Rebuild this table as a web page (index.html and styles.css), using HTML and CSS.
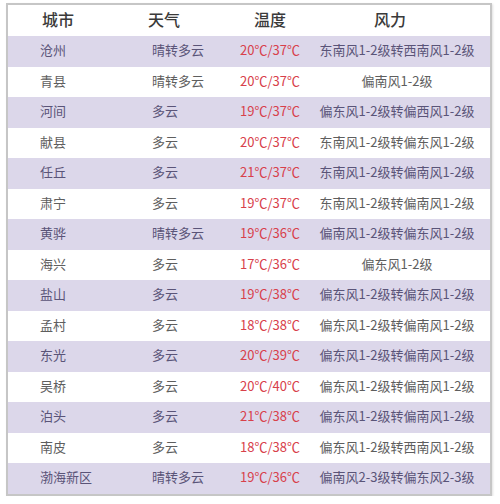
FILE: index.html
```html
<!DOCTYPE html>
<html lang="zh-CN">
<head>
<meta charset="utf-8">
<title>天气</title>
<link rel="stylesheet" href="styles.css">
</head>
<body>
<div class="table">
  <div class="row head">
    <div class="c city">城市</div><div class="c wx">天气</div><div class="c temp">温度</div><div class="c wind">风力</div>
  </div>
  <div class="row alt"><div class="c city">沧州</div><div class="c wx">晴转多云</div><div class="c temp">20℃/37℃</div><div class="c wind">东南风1-2级转西南风1-2级</div></div>
  <div class="row"><div class="c city">青县</div><div class="c wx">晴转多云</div><div class="c temp">20℃/37℃</div><div class="c wind">偏南风1-2级</div></div>
  <div class="row alt"><div class="c city">河间</div><div class="c wx">多云</div><div class="c temp">19℃/37℃</div><div class="c wind">偏东风1-2级转偏西风1-2级</div></div>
  <div class="row"><div class="c city">献县</div><div class="c wx">多云</div><div class="c temp">20℃/37℃</div><div class="c wind">东南风1-2级转偏东风1-2级</div></div>
  <div class="row alt"><div class="c city">任丘</div><div class="c wx">多云</div><div class="c temp">21℃/37℃</div><div class="c wind">东南风1-2级转偏南风1-2级</div></div>
  <div class="row"><div class="c city">肃宁</div><div class="c wx">多云</div><div class="c temp">19℃/37℃</div><div class="c wind">东南风1-2级转偏南风1-2级</div></div>
  <div class="row alt"><div class="c city">黄骅</div><div class="c wx">晴转多云</div><div class="c temp">19℃/36℃</div><div class="c wind">偏南风1-2级转偏东风1-2级</div></div>
  <div class="row"><div class="c city">海兴</div><div class="c wx">多云</div><div class="c temp">17℃/36℃</div><div class="c wind">偏东风1-2级</div></div>
  <div class="row alt"><div class="c city">盐山</div><div class="c wx">多云</div><div class="c temp">19℃/38℃</div><div class="c wind">偏东风1-2级转偏东风1-2级</div></div>
  <div class="row"><div class="c city">孟村</div><div class="c wx">多云</div><div class="c temp">18℃/38℃</div><div class="c wind">偏东风1-2级转偏南风1-2级</div></div>
  <div class="row alt"><div class="c city">东光</div><div class="c wx">多云</div><div class="c temp">20℃/39℃</div><div class="c wind">偏东风1-2级转偏南风1-2级</div></div>
  <div class="row"><div class="c city">吴桥</div><div class="c wx">多云</div><div class="c temp">20℃/40℃</div><div class="c wind">偏东风1-2级转偏南风1-2级</div></div>
  <div class="row alt"><div class="c city">泊头</div><div class="c wx">多云</div><div class="c temp">21℃/38℃</div><div class="c wind">偏东风1-2级转偏南风1-2级</div></div>
  <div class="row"><div class="c city">南皮</div><div class="c wx">多云</div><div class="c temp">18℃/38℃</div><div class="c wind">偏东风1-2级转西南风1-2级</div></div>
  <div class="row alt"><div class="c city">渤海新区</div><div class="c wx">晴转多云</div><div class="c temp">19℃/36℃</div><div class="c wind">偏南风2-3级转偏东风2-3级</div></div>
</div>
</body>
</html>
```

FILE: styles.css
```css
html, body {
  margin: 0;
  padding: 0;
  background: #ffffff;
}
body {
  padding: 3px 0 0 6px;
  font-family: "Noto Sans CJK SC", "Noto Sans", sans-serif;
}
.table {
  width: 482px;
  border: 2px solid #c6c6c6;
  box-shadow: 1px 1px 2px rgba(0,0,0,0.12);
  background: #fff;
}
.row {
  display: grid;
  grid-template-columns: 144px 84px 68px 1fr;
  height: 30.5px;
  box-sizing: border-box;
  padding-bottom: 3px;
  align-items: center;
  font-size: 13px;
  color: #5e5e5e;
}
.row.alt {
  background: #dcd7ea;
  color: #5a5478;
}
.row.head {
  height: 31px;
  padding-bottom: 4px;
  font-size: 16px;
  font-weight: 500;
  color: #3a3a3a;
}
.c {
  white-space: nowrap;
  line-height: 1;
}
.city {
  padding-left: 32px;
}
.head .city {
  padding-left: 34px;
}
.head .wx {
  margin-left: -4px;
}
.temp {
  text-align: center;
  color: #d8404a;
}
.head .temp {
  color: #3a3a3a;
}
.wind {
  text-align: center;
}
.head .wind {
  padding-right: 14px;
}
```
